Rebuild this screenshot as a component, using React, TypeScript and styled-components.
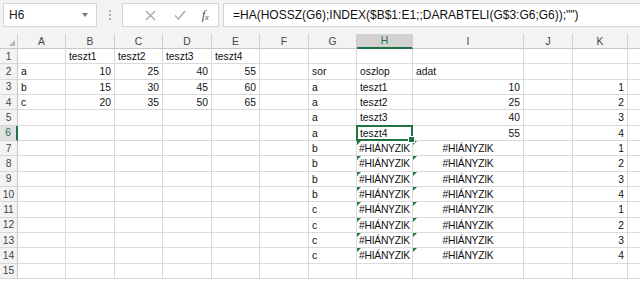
import React from "react"
import styled, { createGlobalStyle, css } from "styled-components"

const GlobalStyle = createGlobalStyle`
	html, body {
		margin: 0;
		padding: 0;
		background: #ffffff;
		overflow: hidden;
	}
	body {
		font-family: "Liberation Sans", Arial, sans-serif;
	}
`

const GREEN = "#217346"

const columns = ["A", "B", "C", "D", "E", "F", "G", "H", "I", "J", "K", "L"]
const widths = [48, 49, 48, 49, 48, 49, 48, 56, 111, 49, 55, 60]
const ROWS = 15

type Align = "left" | "right" | "center"
type CellData = { text: string; align: Align; error?: boolean }

const buildData = (): Record<string, CellData> =>
{
	const d: Record<string, CellData> = {}
	const put = (ref: string, text: string | number, error = false) =>
	{
		const isNum = typeof text === "number"
		d[ref] = { text: String(text), align: error ? "center" : isNum ? "right" : "left", error }
	}
	;["teszt1", "teszt2", "teszt3", "teszt4"].forEach((t, i) => put(`${"BCDE"[i]}1`, t))
	const table: [string, number[]][] = [["a", [10, 25, 40, 55]], ["b", [15, 30, 45, 60]], ["c", [20, 35, 50, 65]]]
	table.forEach(([k, vals], r) =>
	{
		put(`A${r + 2}`, k)
		vals.forEach((v, c) => put(`${"BCDE"[c]}${r + 2}`, v))
	})
	put("G2", "sor")
	put("H2", "oszlop")
	put("I2", "adat")
	for (let i = 0; i < 12; i++)
	{
		const row = i + 3
		put(`G${row}`, "abc"[Math.floor(i / 4)])
		put(`K${row}`, (i % 4) + 1)
		if (i < 4)
		{
			put(`H${row}`, `teszt${i + 1}`)
			put(`I${row}`, [10, 25, 40, 55][i])
		}
		else
		{
			put(`H${row}`, "#HIÁNYZIK", true)
			put(`I${row}`, "#HIÁNYZIK", true)
		}
	}
	return d
}

const data = buildData()

const Window = styled.div`
	width: 640px;
	height: 283px;
	overflow: hidden;
	background: #ffffff;
	display: flex;
	flex-direction: column;
`

const FormulaBar = styled.div`
	height: 34px;
	flex: none;
	background: #f3f3f3;
	display: flex;
	align-items: flex-start;
	padding: 3px 0 0 3px;
	box-sizing: border-box;
`

const NameBox = styled.div`
	width: 94px;
	height: 24px;
	box-sizing: border-box;
	background: #ffffff;
	border: 1px solid #d4d4d4;
	display: flex;
	align-items: center;
	justify-content: space-between;
	padding: 0 8px 0 5px;
	font-size: 12px;
	color: #222;
`

const DropArrow = styled.span`
	width: 0;
	height: 0;
	border-left: 3.5px solid transparent;
	border-right: 3.5px solid transparent;
	border-top: 4px solid #777;
`

const Grip = styled.div`
	width: 25px;
	height: 24px;
	display: flex;
	flex-direction: column;
	align-items: center;
	justify-content: center;
	gap: 2px;
	span {
		width: 2px;
		height: 2px;
		background: #b0b0b0;
	}
`

const ButtonBox = styled.div`
	width: 97px;
	height: 24px;
	box-sizing: border-box;
	background: #ffffff;
	border: 1px solid #d4d4d4;
	display: flex;
	align-items: center;
	padding: 0 0 0 12px;
`

const IconSlot = styled.span<{ $w: number }>`
	width: ${p => p.$w}px;
	display: flex;
	align-items: center;
	justify-content: center;
`

const Fx = styled.span`
	font-family: "Liberation Serif", "Times New Roman", serif;
	font-style: italic;
	font-size: 13px;
	color: #555;
	letter-spacing: -0.5px;
	sub {
		font-size: 9px;
		vertical-align: -1px;
	}
`

const FormulaInput = styled.div`
	flex: 1;
	margin-left: 4px;
	height: 24px;
	box-sizing: border-box;
	background: #ffffff;
	border: 1px solid #d4d4d4;
	border-right: none;
	display: flex;
	align-items: center;
	padding-left: 9px;
	font-size: 12px;
	color: #111;
	white-space: nowrap;
	overflow: hidden;
`

const Sheet = styled.div`
	display: grid;
	grid-template-columns: 18px ${widths.map(w => `${w}px`).join(" ")};
	grid-template-rows: 15px repeat(${ROWS}, 15.33px);
	font-size: 10.3px;
	color: #111;
	background: #ffffff;
`

const HeaderCell = styled.div<{ $active?: boolean }>`
	box-sizing: border-box;
	background: ${p => (p.$active ? "#d2d2d2" : "#f3f3f3")};
	border-right: 1px solid #d0d0d0;
	border-bottom: ${p => (p.$active ? `2px solid ${GREEN}` : "1px solid #c8c8c8")};
	color: ${p => (p.$active ? GREEN : "#444")};
	display: flex;
	align-items: center;
	justify-content: center;
	font-size: 10.3px;
`

const Corner = styled(HeaderCell)`
	position: relative;
	&::after {
		content: "";
		position: absolute;
		right: 2px;
		bottom: 2px;
		width: 0;
		height: 0;
		border-left: 6px solid transparent;
		border-bottom: 6px solid #b8b8b8;
	}
`

const RowHeader = styled.div<{ $active?: boolean }>`
	box-sizing: border-box;
	background: ${p => (p.$active ? "#e1e1e1" : "#f3f3f3")};
	border-right: ${p => (p.$active ? `2px solid ${GREEN}` : "1px solid #c8c8c8")};
	border-bottom: 1px solid #d8d8d8;
	color: ${p => (p.$active ? GREEN : "#444")};
	display: flex;
	align-items: center;
	justify-content: center;
	font-size: 10.3px;
`

const Cell = styled.div<{ $align: Align; $error?: boolean; $selected?: boolean }>`
	position: relative;
	box-sizing: border-box;
	border-right: 1px solid #dadada;
	border-bottom: 1px solid #dadada;
	display: flex;
	align-items: center;
	padding: 1px 3px 0 3px;
	white-space: nowrap;
	justify-content: ${p => (p.$align === "right" ? "flex-end" : p.$align === "center" ? "center" : "flex-start")};
	${p => p.$error && css`
		letter-spacing: -0.25px;
		&::before {
			content: "";
			position: absolute;
			left: 0;
			top: 0;
			width: 0;
			height: 0;
			border-top: 4px solid #1e7b3c;
			border-right: 4px solid transparent;
		}
	`}
	${p => p.$selected && css`
		z-index: 2;
	`}
`

const Selection = styled.span`
	position: absolute;
	left: -1px;
	top: -1px;
	right: -1px;
	bottom: -1px;
	border: 2px solid ${GREEN};
	pointer-events: none;
	&::after {
		content: "";
		position: absolute;
		right: -4px;
		bottom: -4px;
		width: 5px;
		height: 5px;
		background: ${GREEN};
		border: 1px solid #ffffff;
	}
`

const CancelIcon = () => (
	<svg width="11" height="11" viewBox="0 0 11 11">
		<path d="M1 1 L10 10 M10 1 L1 10" stroke="#a6a6a6" strokeWidth="1.2" fill="none" />
	</svg>
)

const EnterIcon = () => (
	<svg width="12" height="10" viewBox="0 0 12 10">
		<path d="M1 5.5 L4.5 9 L11 1" stroke="#a6a6a6" strokeWidth="1.3" fill="none" />
	</svg>
)

const App = () =>
{
	const rows = Array.from({ length: ROWS }, (_, i) => i + 1)
	return (
		<>
			<GlobalStyle />
			<Window>
				<FormulaBar>
					<NameBox>
						<span>H6</span>
						<DropArrow />
					</NameBox>
					<Grip><span /><span /><span /></Grip>
					<ButtonBox>
						<IconSlot $w={30}><CancelIcon /></IconSlot>
						<IconSlot $w={30}><EnterIcon /></IconSlot>
						<IconSlot $w={20}><Fx>f<sub>x</sub></Fx></IconSlot>
					</ButtonBox>
					<FormulaInput>=HA(HOSSZ(G6);INDEX($B$1:E1;;DARABTELI(G$3:G6;G6));"")</FormulaInput>
				</FormulaBar>
				<Sheet>
					<Corner />
					{columns.map(c => (
						<HeaderCell key={c} $active={c === "H"}>{c === "L" ? "" : c}</HeaderCell>
					))}
					{rows.map(r => (
						<React.Fragment key={r}>
							<RowHeader $active={r === 6}>{r}</RowHeader>
							{columns.map(c =>
							{
								const ref = `${c}${r}`
								const cell = data[ref]
								const selected = ref === "H6"
								return (
									<Cell key={ref} $align={cell?.align ?? "left"} $error={cell?.error} $selected={selected}>
										{cell?.text}
										{selected && <Selection />}
									</Cell>
								)
							})}
						</React.Fragment>
					))}
				</Sheet>
			</Window>
		</>
	)
}

export default App
